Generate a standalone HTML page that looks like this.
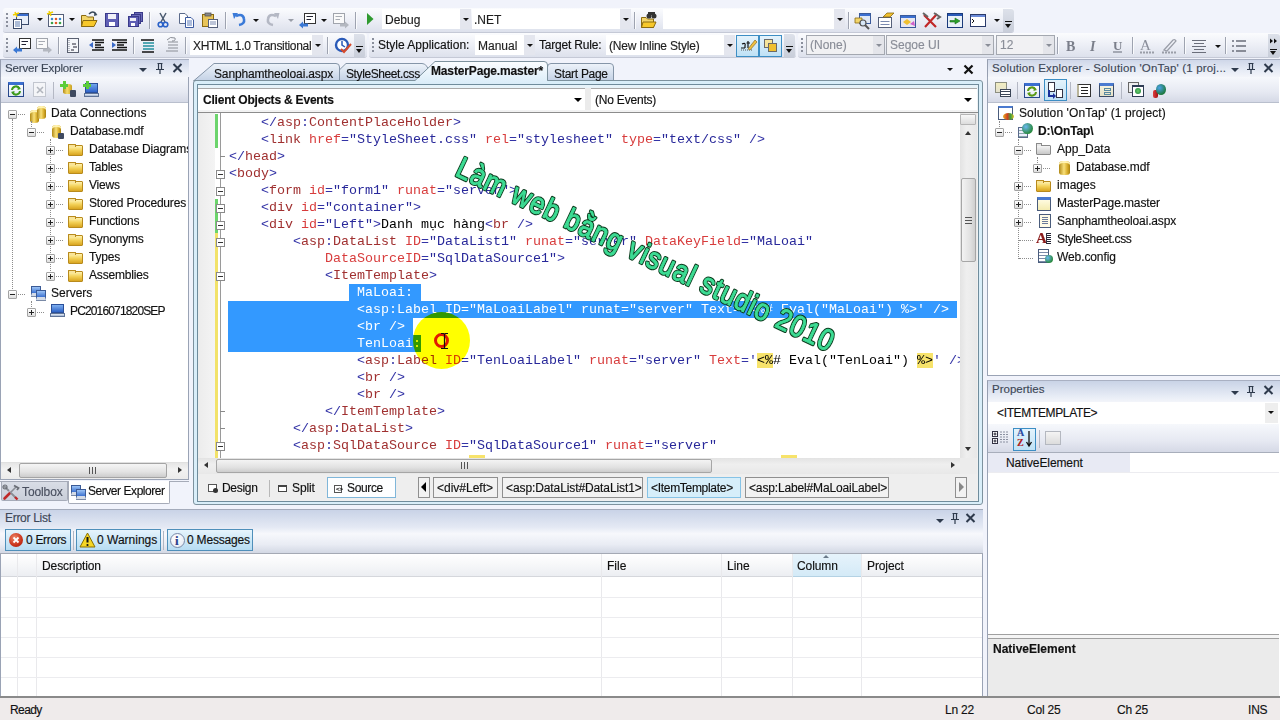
<!DOCTYPE html>
<html><head><meta charset="utf-8">
<style>
*{box-sizing:border-box}
body{margin:0;width:1280px;height:720px;overflow:hidden;background:#f1f3fb;position:relative;font-family:"Liberation Sans",sans-serif;font-size:12px;color:#1e1e1e;-webkit-text-stroke:0.15px currentColor}
.code{-webkit-text-stroke:0}
.a{position:absolute}
.tb{position:absolute;background:linear-gradient(#fbfcfe,#eef0f7 45%,#dde1ec);border-bottom:1px solid #c5c9d6;border-radius:3px}
.grip{position:absolute;width:2px;height:14px;background:linear-gradient(#8a8f9c 0 2px,transparent 2px) 0 0/2px 4px}
.sep{position:absolute;width:2px;top:4px;height:17px;background:linear-gradient(90deg,#9ea3b0 0 1px,#fafbfd 1px)}
.combo{position:absolute;background:#fff;height:20px;white-space:nowrap;overflow:hidden;padding-left:3px;line-height:22px;font-size:12px}
.combo .dd{position:absolute;right:0;top:0;width:11px;height:20px;background:#e4e6ee}
.dd:after,.arr:after{content:"";position:absolute;left:3px;top:9px;border-left:3px solid transparent;border-right:3px solid transparent;border-top:3px solid #111}
.arr{position:absolute;width:9px;height:9px}
.ph{position:absolute;height:18px;background:linear-gradient(#cfd7e9,#e6ebf5 60%,#f3f5fa);border-top:1px solid #a9b0c2;border-left:1px solid #969eb0;color:#3d4757;font-size:11.5px;line-height:17px;padding-left:4px;white-space:nowrap}
.ptb{position:absolute;height:26px;background:linear-gradient(#f6f8fc,#e6e9f2 60%,#d5d9e6);border-bottom:1px solid #b9bfcd}
.tree{position:absolute;background:#fff}
.row{position:absolute;height:18px;line-height:18px;white-space:nowrap;font-size:12px;color:#111}
.code{position:absolute;font-family:"Liberation Mono",monospace;font-size:13.333px;line-height:17px;white-space:pre;color:#000}
.cl{position:absolute;left:0;height:17px}
.sel,.sel span{color:#fff!important}
.hid,.hid span{color:transparent!important;-webkit-text-stroke:0}
.y{background:#f7e36b}
.ob{position:absolute;left:216px;width:9px;height:9px;border:1px solid #8a8a8a;background:#fff}
.ob:after{content:"";position:absolute;left:1px;top:3px;width:5px;height:1px;background:#333}
.otk{position:absolute;left:220px;width:5px;height:1px;background:#8a8a8a}
.bc{position:absolute;top:477px;height:21px;border:1px solid #8f8f8f;background:#f2f2f2;font-size:12px;line-height:20px;padding-left:3px;color:#111;white-space:nowrap}
.exp{position:absolute;width:9px;height:9px;border:1px solid #a3a3a3;border-radius:1px;background:linear-gradient(#fff,#dedede)}
.exp:after{content:"";position:absolute;left:1px;top:3px;width:5px;height:1px;background:#222}
.exp.p:before{content:"";position:absolute;left:3px;top:1px;width:1px;height:5px;background:#222}
.hd{position:absolute;height:1px;border-top:1px dotted #8c8c8c}
.vd{position:absolute;width:1px;border-left:1px dotted #8c8c8c}
.fold{position:absolute;margin-top:2px;width:15px;height:11px;border:1px solid #b88a1c;border-radius:1px;background:linear-gradient(#fff3b0,#f2cf55 50%,#d9a520)}
.fold:before{content:"";position:absolute;left:-1px;top:-2px;width:6px;height:2px;border:1px solid #b88a1c;border-bottom:none;border-radius:1px 1px 0 0;background:#f8e49a}
.cyl{position:absolute;width:9px;height:13px;border-radius:4.5px/2.5px;background:linear-gradient(90deg,#b08816,#f8e07a 45%,#d9ae2c 75%,#a8800e);box-shadow:inset 0 2px 0 #fff2b0}
.srv{position:absolute;width:10px;height:10px;background:linear-gradient(#9cc4f6,#3a70d0);border:1px solid #3a5a96;border-bottom:3px solid #d4dbe6;box-shadow:0 1px 0 #7a8aa6}
.plus{position:absolute;width:8px;height:8px;background:linear-gradient(#5ccc3a,#5ccc3a) center/8px 3px no-repeat,linear-gradient(#5ccc3a,#5ccc3a) center/3px 8px no-repeat;filter:drop-shadow(0 0 0.6px #1d6a10)}
.arr2{position:absolute;border-left:4px solid transparent;border-right:4px solid transparent;border-top:4px solid #2e3a4c}
.ebtn{position:absolute;top:529px;height:22px;border:1px solid #4f8fba;background:linear-gradient(#e6f4fc,#cde8f7 50%,#b7dcf2)}
.etx{position:absolute;top:532px;font-size:12px;line-height:16px;color:#111;white-space:nowrap}
.st{position:absolute;top:702px;font-size:12px;line-height:16px;color:#111;white-space:nowrap}
.ovf{position:absolute;width:11px;height:24px;background:linear-gradient(#dde1ea,#c8cdd9);border-radius:0 3px 3px 0}
.ovf:after{content:"";position:absolute;left:2px;top:15px;border-left:3.5px solid transparent;border-right:3.5px solid transparent;border-top:4px solid #111}
.ovf:before{content:"";position:absolute;left:2px;top:12px;width:7px;height:1px;background:#111}
.ovf2{position:absolute;width:12px;height:24px;background:linear-gradient(#dde1ea,#c8cdd9);border-radius:0 3px 3px 0}
.ovf2:after{content:"";position:absolute;left:2px;top:17px;border-left:3.5px solid transparent;border-right:3.5px solid transparent;border-top:4px solid #111}
.ovf2:before{content:none}
.combo.dis{background:#f1f1f3;border:1px solid #a4a8b0;color:#8a8e98;line-height:18px}
.combo.dis .dd{background:#e4e5ea;height:18px}
.combo.dis .dd:after{border-top-color:#8a8e98;top:8px}
.d{color:#3333a6}.e{color:#a03030}.n{color:#d83c3c}.v{color:#28289a}
</style></head><body>

<!-- ===== TOOLBAR ROW 1 ===== -->
<div class="tb" style="left:3px;top:8px;width:1011px;height:25px"></div>
<div class="grip" style="left:6px;top:13px"></div>
<div class="tb" style="left:3px;top:33px;width:364px;height:25px"></div>
<div class="tb" style="left:369px;top:33px;width:427px;height:25px"></div>
<div class="tb" style="left:798px;top:33px;width:482px;height:25px"></div>
<div class="grip" style="left:6px;top:38px"></div>
<div class="grip" style="left:372px;top:38px"></div>
<div class="grip" style="left:801px;top:38px"></div>
<svg class="a" style="left:0;top:0" width="1280" height="60">
<!-- new project -->
<rect x="16.5" y="13.5" width="12" height="11" fill="#e8eef8" stroke="#3a4a6a"/><rect x="17" y="14" width="11" height="2" fill="#3b6fd0"/>
<rect x="13.5" y="19.5" width="8" height="9" fill="#fff" stroke="#3a4a6a"/><path d="M15,22 H20 M15,24 H20 M15,26 H20" stroke="#5a7ab0"/>
<path d="M15,12 L17,17 M13,15 L19,13" stroke="#f2d000" stroke-width="1.5"/>
<!-- add item -->
<rect x="48.5" y="14.5" width="15" height="12" fill="#fff" stroke="#55607a"/><circle cx="52" cy="19" r="1.3" fill="#3a8ad0"/><circle cx="56" cy="19" r="1.3" fill="#e05a2a"/><circle cx="60" cy="19" r="1.3" fill="#3a8ad0"/><circle cx="52" cy="23" r="1.3" fill="#3aa04a"/><circle cx="56" cy="23" r="1.3" fill="#e05a2a"/><circle cx="60" cy="23" r="1.3" fill="#3aa04a"/>
<path d="M49,11 L51,16 M47,14 L53,12" stroke="#f2d000" stroke-width="1.5"/>
<!-- open -->
<path d="M81.5,15.5 H86 L87.5,17 H93.5 V26.5 H81.5 Z" fill="#f2d56a" stroke="#8a6a10"/><path d="M83,20.5 H97 L94,26.5 H81.5 Z" fill="#f7c82a" stroke="#8a6a10"/>
<path d="M89,14 Q93,10 96,14" stroke="#3a4a5a" stroke-width="1.5" fill="none"/><path d="M94.5,12 L97.5,15 L94,16 Z" fill="#3a4a5a"/>
<!-- save -->
<rect x="105.5" y="13.5" width="13" height="13" fill="#5f5fb5" stroke="#3a3a8a"/><rect x="108" y="14" width="8" height="5" fill="#f0f0f8"/><rect x="109" y="22" width="6" height="4" fill="#fff"/>
<!-- save all -->
<rect x="134.5" y="12.5" width="8" height="9" fill="#6a6ab8" stroke="#3a3a8a"/><rect x="131.5" y="14.5" width="9" height="9" fill="#6a6ab8" stroke="#3a3a8a"/><rect x="128.5" y="16.5" width="10" height="10" fill="#5f5fb5" stroke="#3a3a8a"/><rect x="130" y="18" width="6" height="3" fill="#f0f0f8"/><rect x="131" y="23" width="4" height="3" fill="#fff"/>
<!-- cut -->
<path d="M160,13 L165,22 M166,13 L161,22" stroke="#4a5a70" stroke-width="1.5"/><circle cx="160.5" cy="24.5" r="2.3" fill="none" stroke="#2a62c8" stroke-width="1.6"/><circle cx="165.5" cy="24.5" r="2.3" fill="none" stroke="#2a62c8" stroke-width="1.6"/>
<!-- copy -->
<path d="M179.5,13.5 H185 L187.5,16 V23.5 H179.5 Z" fill="#fff" stroke="#5a6a8a"/><path d="M185.5,17.5 H191 L193.5,20 V27.5 H185.5 Z" fill="#fff" stroke="#3a5aa0"/><path d="M187,21 H192 M187,23 H192 M187,25 H192" stroke="#5a7ab8"/>
<!-- paste -->
<rect x="202.5" y="14.5" width="11" height="12" fill="#e8c458" stroke="#8a6a10"/><rect x="205" y="13" width="6" height="3" fill="#888" stroke="#555" stroke-width="0.8"/><rect x="208.5" y="19.5" width="9" height="8" fill="#fff" stroke="#55607a"/><path d="M210,22 H216 M210,24 H216" stroke="#7a8ab0"/>
<!-- undo -->
<path d="M236,16 Q243,13 244,19 Q245,24 239,25" stroke="#3a7ad8" stroke-width="2.6" fill="none"/><path d="M232.5,13 L238,13 L234,19 Z" fill="#3a7ad8"/>
<!-- redo gray -->
<path d="M276,16 Q269,13 268,19 Q267,24 273,25" stroke="#b4b8c4" stroke-width="2.6" fill="none"/><path d="M279.5,13 L274,13 L278,19 Z" fill="#b4b8c4"/>
<!-- nav back -->
<rect x="304.5" y="13.5" width="11" height="10" fill="#fff" stroke="#333"/><path d="M306.5,16.5 H313 M306.5,19.5 H311" stroke="#223" stroke-width="1"/>
<path d="M299,25 L303,21.5 V23.5 H308 V26.5 H303 V28.5 Z" fill="#3a78d4"/>
<!-- nav fwd gray -->
<rect x="333.5" y="13.5" width="11" height="10" fill="#fafafa" stroke="#a0a4ac"/><path d="M335.5,16.5 H342 M335.5,19.5 H340" stroke="#a8acb4"/>
<path d="M349,25 L345,21.5 V23.5 H340 V26.5 H345 V28.5 Z" fill="#b4b8c0"/>
<!-- play -->
<path d="M367,13 L373.5,19 L367,25 Z" fill="#2f9a2f"/>
<!-- find in files -->
<path d="M641.5,17.5 H646 L647.5,19 H653.5 V27.5 H641.5 Z" fill="#f2d56a" stroke="#8a6a10"/><path d="M643,22 H656 L653.5,27.5 H641.5 Z" fill="#f7c82a" stroke="#8a6a10"/>
<circle cx="649" cy="16" r="2.5" fill="#333"/><circle cx="654" cy="16" r="2.5" fill="#333"/><rect x="648" y="12" width="7" height="3" fill="#333"/>
<!-- right group -->
<rect x="859.5" y="13.5" width="11" height="10" fill="#dfe8f5" stroke="#3a5a9a"/><rect x="860" y="14" width="10" height="2" fill="#3b6fd0"/>
<path d="M855,18 H862 V23 H855 Z" fill="#f2d56a" stroke="#8a6a10" stroke-width="0.8"/><circle cx="863" cy="23" r="3" fill="#d8e8f8" stroke="#555" stroke-width="1.2"/><path d="M865,25 L869,29" stroke="#555" stroke-width="2"/>
<rect x="878.5" y="17.5" width="13" height="10" fill="#fff" stroke="#55607a"/><path d="M880.5,21.5 H889.5 M880.5,24.5 H889.5" stroke="#7a8ab0"/><path d="M883,17 L887,13 H894 L890,17 Z" fill="#f0c030" stroke="#8a6a10" stroke-width="0.8"/>
<rect x="900.5" y="15.5" width="15" height="12" fill="#e8e8f0" stroke="#3a5a9a"/><rect x="901" y="16" width="14" height="2" fill="#3b6fd0"/><path d="M903,22 L907,19 L911,22 L907,25 Z" fill="#f0c030"/><path d="M910,24 L914,21 L915,26 Z" fill="#d060c8"/>
<path d="M925,27 L937,14 M924,15 L936,27" stroke="#c02828" stroke-width="2.2"/><path d="M923,13 L928,17 M934,13 L940,17 L937,19" stroke="#666" stroke-width="2" fill="none"/>
<rect x="947.5" y="13.5" width="15" height="14" fill="#e8f0f8" stroke="#1a3a7a"/><rect x="948" y="14" width="14" height="2" fill="#2a5ab8"/><path d="M950,20.5 H955 V18 L960,21 L955,24 V22 H950 Z" fill="#2aa02a" stroke="#1a701a" stroke-width="0.6"/>
<rect x="970.5" y="14.5" width="15" height="12" fill="#fff" stroke="#2a3a6a"/><rect x="971" y="15" width="14" height="2" fill="#6a8ad8"/><path d="M972,19 L974,21 L972,23" stroke="#111" fill="none"/>
<!-- row 2 left -->
<rect x="19.5" y="38.5" width="11" height="10" fill="#fff" stroke="#333"/><path d="M21.5,41.5 H28 M21.5,44.5 H26" stroke="#223"/>
<path d="M13,50 L17,46.5 V48.5 H22 V51.5 H17 V53.5 Z" fill="#3a78d4"/>
<rect x="36.5" y="38.5" width="11" height="10" fill="#fafafa" stroke="#a0a4ac"/><path d="M38.5,41.5 H45 M38.5,44.5 H43" stroke="#a8acb4"/>
<path d="M52,50 L48,46.5 V48.5 H43 V51.5 H48 V53.5 Z" fill="#b4b8c0"/>
<rect x="67.5" y="38.5" width="11" height="14" fill="#f4f6fa" stroke="#5a6070"/><path d="M69,40 V51" stroke="#7a8090" stroke-dasharray="1,1"/><path d="M72,44 H76 M73,47 H77 M71,50 H74" stroke="#223"/>
<path d="M92,40 H104 M95,42.5 H104 M95,45 H101 M95,47.5 H104 M92,50 H104" stroke="#111" stroke-width="1.5"/><path d="M89,45 L93,42 V48 Z" fill="#3a6ac8"/>
<path d="M112,40 H127 M117,42.5 H127 M117,45 H124 M117,47.5 H127 M112,50 H127" stroke="#111" stroke-width="1.5"/><path d="M116,45 L112,42 V48 Z" fill="#3a6ac8"/>
<path d="M141,40 H154 M143,43 H154 M143,46 H154 M143,49 H154 M142,52 H154" stroke="#111" stroke-width="1.3"/><path d="M143,43 H154 M143,46 H154 M143,49 H154" stroke="#5ac8d8" stroke-width="1.3"/>
<path d="M168,42 H178 M168,45 H178 M168,48 H178 M166,51 H178" stroke="#8a8e96" stroke-width="1.2"/><path d="M167,40 Q170,36 175,38 Q176,41 172,41" stroke="#8a8e96" fill="none"/>
<circle cx="342" cy="45" r="6" fill="#fff" stroke="#2a5ab8" stroke-width="2.4"/><path d="M342,41 V45 L345,47" stroke="#2a5ab8" stroke-width="1.5" fill="none"/><path d="M341,49 L344,52 L351,44" stroke="#d84a2a" stroke-width="2" fill="none"/>
<!-- formatting -->
<text x="1066" y="51" font-family="Liberation Serif" font-weight="bold" font-size="14" fill="#7a7e8a">B</text>
<text x="1090" y="51" font-family="Liberation Serif" font-style="italic" font-weight="bold" font-size="14" fill="#7a7e8a">I</text>
<text x="1113" y="50" font-family="Liberation Serif" font-weight="bold" font-size="13" fill="#7a7e8a">U</text><path d="M1113,52 H1122" stroke="#7a7e8a" stroke-width="1.2"/>
<text x="1140" y="50" font-family="Liberation Serif" font-size="15" fill="#8a8e9a">A</text><path d="M1140,52.5 H1154" stroke="#9a9ea8" stroke-width="2" stroke-dasharray="2,1"/>
<path d="M1164,50 L1173,40 Q1175,39 1176,41 L1167,51 Z" fill="none" stroke="#9a9ea8" stroke-width="1.3"/><path d="M1162,52.5 H1177" stroke="#9a9ea8" stroke-width="2" stroke-dasharray="2,1"/>
<path d="M1192,40.5 H1206 M1194,43.5 H1204 M1192,46.5 H1206 M1194,49.5 H1204 M1192,52.5 H1206" stroke="#6a6e7a" stroke-width="1.2"/>
<path d="M1232,41 H1234 M1232,46 H1234 M1232,51 H1234" stroke="#8a8e9a" stroke-width="2"/><path d="M1236,41 H1246 M1236,46 H1246 M1236,51 H1246" stroke="#6a6e7a" stroke-width="1.3"/>
</svg>
<div class="a" style="left:37px;top:18px;border-left:3px solid transparent;border-right:3px solid transparent;border-top:3px solid #111"></div>
<div class="a" style="left:69px;top:18px;border-left:3px solid transparent;border-right:3px solid transparent;border-top:3px solid #111"></div>
<div class="a" style="left:253px;top:19px;border-left:3px solid transparent;border-right:3px solid transparent;border-top:3px solid #111"></div>
<div class="a" style="left:321px;top:19px;border-left:3px solid transparent;border-right:3px solid transparent;border-top:3px solid #111"></div>
<div class="a" style="left:994px;top:19px;border-left:3px solid transparent;border-right:3px solid transparent;border-top:3px solid #111"></div>
<div class="a" style="left:1215px;top:45px;border-left:3px solid transparent;border-right:3px solid transparent;border-top:3px solid #111"></div>
<div class="a" style="left:288px;top:19px;border-left:3px solid transparent;border-right:3px solid transparent;border-top:3px solid #9a9ea8"></div>
<div class="sep" style="left:149px;top:12px"></div>
<div class="sep" style="left:225px;top:12px"></div>
<div class="sep" style="left:355px;top:12px"></div>
<div class="sep" style="left:634px;top:12px"></div>
<div class="sep" style="left:848px;top:12px"></div>
<div class="sep" style="left:58px;top:37px"></div>
<div class="sep" style="left:133px;top:37px"></div>
<div class="sep" style="left:185px;top:37px"></div>
<div class="sep" style="left:327px;top:37px"></div>
<div class="sep" style="left:1057px;top:37px"></div>
<div class="sep" style="left:1132px;top:37px"></div>
<div class="sep" style="left:1184px;top:37px"></div>
<div class="sep" style="left:1225px;top:37px"></div>
<div class="combo" style="left:382px;top:9px;width:89px;padding-left:3px">Debug<div class="dd" style="height:20px"></div></div>
<div class="combo" style="left:472px;top:9px;width:159px;padding-left:2px">.NET<div class="dd"></div></div>
<div class="combo" style="left:663px;top:9px;width:182px"><div class="dd"></div></div>
<div class="ovf" style="left:1003px;top:9px;height:23px"></div>
<!-- ===== TOOLBAR ROW 2 ===== -->

<div class="combo" style="left:190px;top:35px;width:133px;letter-spacing:-0.3px">XHTML 1.0 Transitional<div class="dd"></div></div>
<div class="ovf" style="left:354px;top:34px"></div>
<div class="a" style="left:378px;top:37px;font-size:12px;line-height:16px;color:#111;letter-spacing:0px">Style Application:</div>
<div class="combo" style="left:475px;top:35px;width:60px">Manual<div class="dd"></div></div>
<div class="a" style="left:539px;top:37px;font-size:12px;line-height:16px;color:#111;letter-spacing:-0.2px">Target Rule:</div>
<div class="combo" style="left:606px;top:35px;width:129px;letter-spacing:-0.2px">(New Inline Style)<div class="dd"></div></div>
<div class="a" style="left:736px;top:35px;width:23px;height:22px;border:1px solid #3d8ec4;background:linear-gradient(#e4f3fc,#bfe1f5)"></div>
<div class="a" style="left:759px;top:35px;width:23px;height:22px;border:1px solid #3d8ec4;background:linear-gradient(#e4f3fc,#bfe1f5)"></div>
<div class="ovf" style="left:784px;top:34px"></div>
<svg class="a" style="left:0;top:0" width="800" height="60"><!-- style buttons -->
<path d="M741,48 H745 M742,44 Q746,42 745,46 V48 M748,41 V48 M746.5,43 H750" stroke="#111" stroke-width="1.2" fill="none"/><path d="M741,50 H752" stroke="#555" stroke-dasharray="1,1"/><path d="M748,49 L755,40 L757,42 L750,50 Z" fill="#f0c040" stroke="#7a5a10" stroke-width="0.6"/>
<rect x="764.5" y="39.5" width="8" height="8" fill="#f6e49a" stroke="#6a6a6a"/><rect x="768.5" y="43.5" width="8" height="8" fill="#f0c030" stroke="#6a6a6a"/>
</svg>
<div class="combo dis" style="left:806px;top:35px;width:79px">(None)<div class="dd"></div></div>
<div class="combo dis" style="left:886px;top:35px;width:108px">Segoe UI<div class="dd"></div></div>
<div class="combo dis" style="left:996px;top:35px;width:59px">12<div class="dd"></div></div>
<div class="ovf2" style="left:1268px;top:34px"></div><svg class="a" style="left:1268px;top:34px" width="12" height="24"><path d="M2,4.5 L5,7 L2,9.5 Z M6,4.5 L9,7 L6,9.5 Z" fill="#111"/><path d="M2,15.5 H9" stroke="#111"/></svg>

<!-- ===== SERVER EXPLORER ===== -->
<div class="a" style="left:0;top:59px;width:189px;height:421px;background:#fff;border:1px solid #9aa3b5"></div>
<div class="ph" style="left:0;top:59px;width:189px;letter-spacing:-0.15px">Server Explorer</div>
<div class="arr2" style="left:139px;top:68px"></div>
<svg class="a" style="left:154px;top:62px" width="12" height="13"><path d="M3.5,1.5 H8.5 M4.5,1.5 V7.5 M7.5,1.5 V7.5 M2,7.5 H10 M6,7.5 V12" stroke="#2e3a4c" stroke-width="1.2" fill="none"/></svg>
<svg class="a" style="left:172px;top:63px" width="11" height="10"><path d="M1.5,1 L9.5,9 M9.5,1 L1.5,9" stroke="#2e3a4c" stroke-width="2"/></svg>
<div class="ptb" style="left:1px;top:77px;width:187px"></div>
<div class="a" style="left:8px;top:82px;width:16px;height:15px;border:1px solid #27478a;border-top:3px solid #3b6fd0;background:linear-gradient(#fff,#dfe8f5)"></div>
<svg class="a" style="left:10px;top:85px" width="12" height="11"><path d="M2,5 A4,4 0 0 1 9.5,3.5 M10,6 A4,4 0 0 1 2.5,7.5" stroke="#3d9a1c" stroke-width="2" fill="none"/><path d="M8,1 L11,4 L7.5,5 Z M4,10 L1,7 L4.5,6 Z" fill="#3d9a1c"/></svg>
<div class="a" style="left:33px;top:82px;width:13px;height:15px;border:1px solid #c2c6cf;background:#f4f5f8"></div>
<svg class="a" style="left:36px;top:86px" width="8" height="8"><path d="M1,1 L7,7 M7,1 L1,7" stroke="#b2b6be" stroke-width="1.6"/></svg>
<div class="a" style="left:53px;top:82px;width:1px;height:17px;background:#b4b8c4"></div>
<div class="a" style="left:63px;top:84px;width:9px;height:10px;border-radius:4px/2px;background:linear-gradient(90deg,#b48a18,#f6dc6a 45%,#c8a020)"></div>
<div class="a" style="left:70px;top:90px;width:6px;height:7px;background:#3f4a60;border-radius:1px"></div>
<div class="plus" style="left:60px;top:81px"></div>
<div class="a" style="left:85px;top:83px;width:13px;height:10px;background:linear-gradient(#72a6ec,#2f63c9);border:1px solid #2a4f9a"></div>
<div class="a" style="left:84px;top:93px;width:15px;height:4px;background:linear-gradient(#e8eef8,#9fb2cf);border:1px solid #5f7396"></div>
<div class="plus" style="left:83px;top:81px"></div>
<div class="vd" style="left:12px;top:119px;height:172px"></div>
<div class="exp" style="left:8px;top:110px"></div><div class="hd" style="left:18px;top:114px;width:7px"></div><div class="cyl" style="left:30px;top:110px"></div><div class="cyl" style="left:37px;top:106px"></div><div class="row" style="left:51px;top:104px;letter-spacing:0px">Data Connections</div>
<div class="vd" style="left:31px;top:121px;height:6px"></div>
<div class="exp" style="left:27px;top:128px"></div><div class="hd" style="left:37px;top:132px;width:7px"></div><div class="cyl" style="left:52px;top:125px"></div><div class="a" style="left:58px;top:133px;width:6px;height:6px;background:#3f4a60;border-radius:1px"></div><div class="row" style="left:70px;top:122px;letter-spacing:-0.1px">Database.mdf</div>
<div class="vd" style="left:50px;top:139px;height:136px"></div>
<div class="exp p" style="left:46px;top:146px"></div><div class="hd" style="left:56px;top:150px;width:7px"></div><div class="fold" style="left:68px;top:143px"></div><div class="row" style="left:89px;top:140px;letter-spacing:-0.18px;width:99px;overflow:hidden">Database Diagrams</div>
<div class="exp p" style="left:46px;top:164px"></div><div class="hd" style="left:56px;top:168px;width:7px"></div><div class="fold" style="left:68px;top:161px"></div><div class="row" style="left:89px;top:158px;letter-spacing:-0.18px">Tables</div>
<div class="exp p" style="left:46px;top:182px"></div><div class="hd" style="left:56px;top:186px;width:7px"></div><div class="fold" style="left:68px;top:179px"></div><div class="row" style="left:89px;top:176px;letter-spacing:-0.18px">Views</div>
<div class="exp p" style="left:46px;top:200px"></div><div class="hd" style="left:56px;top:204px;width:7px"></div><div class="fold" style="left:68px;top:197px"></div><div class="row" style="left:89px;top:194px;letter-spacing:-0.18px">Stored Procedures</div>
<div class="exp p" style="left:46px;top:218px"></div><div class="hd" style="left:56px;top:222px;width:7px"></div><div class="fold" style="left:68px;top:215px"></div><div class="row" style="left:89px;top:212px;letter-spacing:-0.18px">Functions</div>
<div class="exp p" style="left:46px;top:236px"></div><div class="hd" style="left:56px;top:240px;width:7px"></div><div class="fold" style="left:68px;top:233px"></div><div class="row" style="left:89px;top:230px;letter-spacing:-0.18px">Synonyms</div>
<div class="exp p" style="left:46px;top:254px"></div><div class="hd" style="left:56px;top:258px;width:7px"></div><div class="fold" style="left:68px;top:251px"></div><div class="row" style="left:89px;top:248px;letter-spacing:-0.18px">Types</div>
<div class="exp p" style="left:46px;top:272px"></div><div class="hd" style="left:56px;top:276px;width:7px"></div><div class="fold" style="left:68px;top:269px"></div><div class="row" style="left:89px;top:266px;letter-spacing:-0.18px">Assemblies</div>
<div class="exp" style="left:8px;top:290px"></div><div class="hd" style="left:18px;top:294px;width:7px"></div>
<div class="srv" style="left:31px;top:286px"></div><div class="srv" style="left:36px;top:290px"></div>
<div class="row" style="left:51px;top:284px;">Servers</div>
<div class="vd" style="left:31px;top:301px;height:6px"></div>
<div class="exp p" style="left:27px;top:308px"></div><div class="hd" style="left:37px;top:312px;width:7px"></div>
<div class="a" style="left:51px;top:304px;width:13px;height:9px;background:linear-gradient(#7fb0f0,#2d62c6);border:1px solid #2a4f9a"></div><div class="a" style="left:50px;top:313px;width:15px;height:4px;background:linear-gradient(#e8eef8,#9fb2cf);border:1px solid #5f7396"></div>
<div class="row" style="left:70px;top:302px;letter-spacing:-0.85px">PC2016071820SEP</div>
<div class="a" style="left:1px;top:462px;width:187px;height:17px;background:linear-gradient(#e6e6e6,#f2f2f2 40%,#ebebeb);border-top:1px solid #e0e0e0"></div>
<div class="a" style="left:7px;top:467px;border-top:3.5px solid transparent;border-bottom:3.5px solid transparent;border-right:4px solid #333"></div>
<div class="a" style="left:178px;top:467px;border-top:3.5px solid transparent;border-bottom:3.5px solid transparent;border-left:4px solid #333"></div>
<div class="a" style="left:19px;top:463px;width:148px;height:15px;background:linear-gradient(#f5f5f5,#e3e3e3 60%,#cccccc);border:1px solid #a4a4a4;border-radius:2px"></div>
<div class="a" style="left:89px;top:467px;width:7px;height:7px;background:repeating-linear-gradient(90deg,#555 0 1px,transparent 1px 3px)"></div>
<div class="a" style="left:0;top:480px;width:189px;height:29px;background:#f1f3fb"></div>
<div class="a" style="left:0;top:481px;width:189px;height:1px;background:#a6abb8"></div>
<div class="a" style="left:1px;top:482px;width:67px;height:19px;background:linear-gradient(#d9dde6,#c9ced9);border:1px solid #a6abb8;border-top:none;border-radius:0 0 2px 2px"></div>
<svg class="a" style="left:2px;top:484px" width="18" height="17"><path d="M2.5,14.5 L8,9" stroke="#c02828" stroke-width="2.6" stroke-linecap="round"/><path d="M8,9 L14,3" stroke="#8a8e96" stroke-width="1.6"/><path d="M12,1.5 L16.5,4 L15,6" stroke="#6a6e76" stroke-width="1.8" fill="none"/><path d="M2,2 L7,7 M9,9 L14,14" stroke="#8a8e96" stroke-width="1.8"/><path d="M13,13 L15.5,15.5" stroke="#c02828" stroke-width="2.4"/><circle cx="3" cy="3" r="2" fill="none" stroke="#6a6e76" stroke-width="1.2"/></svg>
<div class="a" style="left:22px;top:484px;font-size:12px;line-height:16px;color:#4a5060;letter-spacing:-0.1px">Toolbox</div>
<div class="a" style="left:68px;top:481px;width:102px;height:23px;background:#fff;border:1px solid #a6abb8;border-top:none;border-radius:0 0 2px 2px"></div>
<div class="srv" style="left:71px;top:485px"></div><div class="srv" style="left:76px;top:489px"></div>
<div class="a" style="left:88px;top:483px;font-size:12px;line-height:16px;color:#111;letter-spacing:-0.45px">Server Explorer</div>

<!-- ===== DOCUMENT WELL ===== -->
<div class="a" style="left:193px;top:80px;width:790px;height:425px;border:1px solid #7d929e;border-radius:3px;background:#d9eef9"></div>
<div class="a" style="left:197px;top:84px;width:782px;height:418px;border:1px solid #6f8c9c;background:#f0f0f0"></div>
<svg class="a" style="left:0;top:0" width="1280" height="90">
<defs>
<linearGradient id="tabI" x1="0" y1="0" x2="0" y2="1"><stop offset="0" stop-color="#eef3fa"/><stop offset="1" stop-color="#c3d1e5"/></linearGradient>
<linearGradient id="tabA" x1="0" y1="0" x2="0" y2="1"><stop offset="0" stop-color="#fbfdff"/><stop offset="1" stop-color="#d9ecf8"/></linearGradient>
</defs>
<path d="M328,81 L346,63.5 H422 Q425,63.5 426.5,66 L429,70 L419,81" fill="url(#tabI)" stroke="#8595a8"/>
<path d="M193.5,81 L214,63.5 H336 Q339.5,63.5 339.5,67 V81" fill="url(#tabI)" stroke="#8595a8"/>
<path d="M547.5,81 V67 Q547.5,63.5 551,63.5 H610 Q613.5,63.5 613.5,67 V81" fill="url(#tabI)" stroke="#8595a8"/>
<path d="M415,81 L435,61.5 H544 Q547.5,61.5 547.5,65 V81 V84 H415 Z" fill="url(#tabA)" stroke="none"/>
<path d="M415,80.5 L435,61.5 H544 Q547.5,61.5 547.5,65 V80.5" fill="none" stroke="#7d929e"/>
<path d="M193.5,80.5 H415 M547.5,80.5 H979" stroke="#7d929e"/>
</svg>
<div class="a" style="left:214px;top:65.5px;font-size:12px;line-height:16px;letter-spacing:-0.15px;color:#111">Sanphamtheoloai.aspx</div>
<div class="a" style="left:346px;top:65.5px;font-size:12px;line-height:16px;letter-spacing:-0.4px;color:#111">StyleSheet.css</div>
<div class="a" style="left:431px;top:63px;font-size:12px;line-height:16px;letter-spacing:-0.15px;font-weight:bold;color:#111">MasterPage.master*</div>
<div class="a" style="left:554px;top:65.5px;font-size:12px;line-height:16px;letter-spacing:-0.3px;color:#111">Start Page</div>
<div class="arr" style="left:944px;top:59px"></div>
<svg class="a" style="left:963px;top:64px" width="12" height="11"><path d="M1.5,1.5 L9.5,9.5 M9.5,1.5 L1.5,9.5" stroke="#111" stroke-width="2.2"/></svg>
<div class="a" style="left:198px;top:85px;width:780px;height:28px;background:linear-gradient(#e6f3fa,#f2f2f2);border-bottom:1px solid #8c8c8c"></div>
<div class="a" style="left:198px;top:88px;width:387px;height:22px;background:#fff;border-top:1px solid #a9a9a9"></div>
<div class="a" style="left:591px;top:88px;width:386px;height:22px;background:#fff;border-top:1px solid #a9a9a9"></div>
<div class="a" style="left:585px;top:88px;width:6px;height:22px;background:#ebebeb"></div>
<div class="a" style="left:203px;top:92px;font-size:12px;line-height:16px;font-weight:bold;letter-spacing:-0.2px;color:#111">Client Objects &amp; Events</div>
<div class="a" style="left:595px;top:92px;font-size:12px;line-height:16px;letter-spacing:-0.2px;color:#111">(No Events)</div>
<div class="a" style="left:574px;top:98px;border-left:4px solid transparent;border-right:4px solid transparent;border-top:4px solid #000"></div>
<div class="a" style="left:964px;top:98px;border-left:4px solid transparent;border-right:4px solid transparent;border-top:4px solid #000"></div>
<div class="a" style="left:198px;top:113px;width:762px;height:345px;background:#fff"></div>
<!-- code area -->
<div class="a" style="left:198px;top:113px;width:17px;height:345px;background:linear-gradient(90deg,#ececec,#f4f4f4)"></div>
<div class="a" style="left:215px;top:114px;width:3px;height:34px;background:#6cd46c"></div>
<div class="a" style="left:215px;top:199px;width:3px;height:34px;background:#6cd46c"></div>
<div class="a" style="left:215px;top:233px;width:3px;height:225px;background:#f2e26a"></div>
<div class="a" style="left:220px;top:113px;width:1px;height:345px;background:#9a9a9a"></div>
<!-- outline boxes -->
<div class="ob" style="top:170px"></div><div class="ob" style="top:187px"></div><div class="ob" style="top:204px"></div><div class="ob" style="top:221px"></div><div class="ob" style="top:238px"></div><div class="ob" style="top:272px"></div><div class="ob" style="top:442px"></div>
<div class="otk" style="top:156px"></div><div class="otk" style="top:411px"></div><div class="otk" style="top:428px"></div>
<!-- vscroll -->
<div class="a" style="left:960px;top:113px;width:17px;height:345px;background:linear-gradient(90deg,#e3e3e3,#efefef 40%,#e8e8e8)"></div>
<div class="a" style="left:960px;top:114px;width:16px;height:11px;background:linear-gradient(#f8f8f8,#dcdcdc);border:1px solid #b5b5b5;border-radius:1px"></div>
<div class="a" style="left:965px;top:131px;border-left:3.5px solid transparent;border-right:3.5px solid transparent;border-bottom:4px solid #333"></div>
<div class="a" style="left:961px;top:178px;width:15px;height:84px;background:linear-gradient(90deg,#f3f3f3,#e2e2e2 60%,#cfcfcf);border:1px solid #a6a6a6;border-radius:2px"></div>
<div class="a" style="left:965px;top:217px;width:7px;height:7px;background:repeating-linear-gradient(#555 0 1px,transparent 1px 3px)"></div>
<div class="a" style="left:965px;top:447px;border-left:3.5px solid transparent;border-right:3.5px solid transparent;border-top:4px solid #333"></div>
<!-- hscroll -->
<div class="a" style="left:198px;top:458px;width:779px;height:17px;background:linear-gradient(#e3e3e3,#efefef 40%,#e8e8e8);border-bottom:1px solid #a8a8a8"></div>
<div class="a" style="left:204px;top:462px;border-top:3.5px solid transparent;border-bottom:3.5px solid transparent;border-right:4px solid #333"></div>
<div class="a" style="left:951px;top:462px;border-top:3.5px solid transparent;border-bottom:3.5px solid transparent;border-left:4px solid #333"></div>
<div class="a" style="left:216px;top:459px;width:496px;height:14px;background:linear-gradient(#f4f4f4,#e2e2e2 60%,#cdcdcd);border:1px solid #a6a6a6;border-radius:2px"></div>
<div class="a" style="left:461px;top:462px;width:7px;height:7px;background:repeating-linear-gradient(90deg,#555 0 1px,transparent 1px 3px)"></div>
<div class="a" style="left:960px;top:458px;width:17px;height:16px;background:#ececec"></div>
<!-- bottom bar -->
<div class="a" style="left:198px;top:474px;width:779px;height:26px;background:#eeeeee"></div>
<div class="a" style="left:208px;top:484px;width:9px;height:8px;border:1px solid #555;background:#fff"></div>
<div class="a" style="left:213px;top:488px;width:5px;height:5px;border-radius:50%;background:#333"></div>
<div class="a" style="left:222px;top:480px;font-size:12px;line-height:16px;color:#111;letter-spacing:-0.3px">Design</div>
<div class="a" style="left:269px;top:480px;width:1px;height:17px;background:#b8b8b8"></div>
<div class="a" style="left:278px;top:485px;width:9px;height:7px;border:1px solid #444;border-top-width:2px;background:#fff"></div>
<div class="a" style="left:292px;top:480px;font-size:12px;line-height:16px;color:#111;letter-spacing:-0.1px">Split</div>
<div class="a" style="left:327px;top:477px;width:69px;height:21px;border:1px solid #7fb6d9;background:#fdfeff"></div>
<div class="a" style="left:334px;top:485px;width:8px;height:8px;border:1px solid #555;background:#fff"></div>
<div class="a" style="left:336px;top:486px;font-size:6px;line-height:6px;color:#111">&lt;&gt;</div>
<div class="a" style="left:347px;top:480px;font-size:12px;line-height:16px;color:#111;letter-spacing:-0.35px">Source</div>
<div class="bc" style="left:418px;width:12px"></div>
<div class="a" style="left:421px;top:482px;border-top:5px solid transparent;border-bottom:5px solid transparent;border-right:5px solid #000"></div>
<div class="bc" style="left:433px;width:65px">&lt;div#Left&gt;</div>
<div class="bc" style="left:502px;width:141px;letter-spacing:-0.1px">&lt;asp:DataList#DataList1&gt;</div>
<div class="bc" style="left:647px;width:94px;background:#d6eefa;border-color:#86c3e6;letter-spacing:-0.3px">&lt;ItemTemplate&gt;</div>
<div class="bc" style="left:745px;width:144px;letter-spacing:-0.15px">&lt;asp:Label#MaLoaiLabel&gt;</div>
<div class="bc" style="left:955px;width:12px"></div>
<div class="a" style="left:959px;top:482px;border-top:5px solid transparent;border-bottom:5px solid transparent;border-left:5px solid #888"></div>
<div class="a" id="code" style="left:221px;top:114px;width:739px;height:344px;overflow:hidden">
<div class="a" style="left:128px;top:170px;width:72px;height:17px;background:#3399ff"></div>
<div class="a" style="left:7px;top:187px;width:729px;height:17px;background:#3399ff"></div>
<div class="a" style="left:7px;top:204px;width:185px;height:34px;background:#3399ff"></div>
<div class="a" style="left:192px;top:221px;width:8px;height:17px;background:#3399ff"></div>
<div class="code" style="left:8px;top:0">
<div class="cl" style="top:0px">    <span class="d">&lt;/</span><span class="e">asp</span><span class="d">:</span><span class="e">ContentPlaceHolder</span><span class="d">&gt;</span></div>
<div class="cl" style="top:17px">    <span class="d">&lt;</span><span class="e">link</span> <span class="n">href</span><span class="d">=</span><span class="v">"StyleSheet.css"</span> <span class="n">rel</span><span class="d">=</span><span class="v">"stylesheet"</span> <span class="n">type</span><span class="d">=</span><span class="v">"text/css"</span><span class="d"> /&gt;</span></div>
<div class="cl" style="top:34px"><span class="d">&lt;/</span><span class="e">head</span><span class="d">&gt;</span></div>
<div class="cl" style="top:51px"><span class="d">&lt;</span><span class="e">body</span><span class="d">&gt;</span></div>
<div class="cl" style="top:68px">    <span class="d">&lt;</span><span class="e">form</span> <span class="n">id</span><span class="d">=</span><span class="v">"form1"</span> <span class="n">runat</span><span class="d">=</span><span class="v">"server"</span><span class="d">&gt;</span></div>
<div class="cl" style="top:85px">    <span class="d">&lt;</span><span class="e">div</span> <span class="n">id</span><span class="d">=</span><span class="v">"container"</span><span class="d">&gt;</span></div>
<div class="cl" style="top:102px">    <span class="d">&lt;</span><span class="e">div</span> <span class="n">id</span><span class="d">=</span><span class="v">"Left"</span><span class="d">&gt;</span>Danh mục hàng<span class="d">&lt;</span><span class="e">br</span><span class="d"> /&gt;</span></div>
<div class="cl" style="top:119px">        <span class="d">&lt;</span><span class="e">asp</span><span class="d">:</span><span class="e">DataList</span> <span class="n">ID</span><span class="d">=</span><span class="v">"DataList1"</span> <span class="n">runat</span><span class="d">=</span><span class="v">"server"</span> <span class="n">DataKeyField</span><span class="d">=</span><span class="v">"MaLoai"</span></div>
<div class="cl" style="top:136px">            <span class="n">DataSourceID</span><span class="d">=</span><span class="v">"SqlDataSource1"</span><span class="d">&gt;</span></div>
<div class="cl" style="top:153px">            <span class="d">&lt;</span><span class="e">ItemTemplate</span><span class="d">&gt;</span></div>
<div class="cl sel" style="top:170px">                MaLoai:</div>
<div class="cl sel" style="top:187px">                <span class="d">&lt;</span><span class="e">asp</span><span class="d">:</span><span class="e">Label</span> <span class="n">ID</span><span class="d">=</span><span class="v">"MaLoaiLabel"</span> <span class="n">runat</span><span class="d">=</span><span class="v">"server"</span> <span class="n">Text</span><span class="d">='</span>&lt;%# Eval("MaLoai") %&gt;<span class="d">'</span><span class="d"> /&gt;</span></div>
<div class="cl sel" style="top:204px">                <span class="d">&lt;</span><span class="e">br</span><span class="d"> /&gt;</span></div>
<div class="cl sel" style="top:221px">                TenLoai:</div>
<div class="cl" style="top:238px">                <span class="d">&lt;</span><span class="e">asp</span><span class="d">:</span><span class="e">Label</span> <span class="n">ID</span><span class="d">=</span><span class="v">"TenLoaiLabel"</span> <span class="n">runat</span><span class="d">=</span><span class="v">"server"</span> <span class="n">Text</span><span class="d">='</span><span class="y">&lt;%</span># Eval("TenLoai") <span class="y">%&gt;</span><span class="d">'</span><span class="d"> /&gt;</span></div>
<div class="cl" style="top:255px">                <span class="d">&lt;</span><span class="e">br</span><span class="d"> /&gt;</span></div>
<div class="cl" style="top:272px">                <span class="d">&lt;</span><span class="e">br</span><span class="d"> /&gt;</span></div>
<div class="cl" style="top:289px">            <span class="d">&lt;/</span><span class="e">ItemTemplate</span><span class="d">&gt;</span></div>
<div class="cl" style="top:306px">        <span class="d">&lt;/</span><span class="e">asp</span><span class="d">:</span><span class="e">DataList</span><span class="d">&gt;</span></div>
<div class="cl" style="top:323px">        <span class="d">&lt;</span><span class="e">asp</span><span class="d">:</span><span class="e">SqlDataSource</span> <span class="n">ID</span><span class="d">=</span><span class="v">"SqlDataSource1"</span> <span class="n">runat</span><span class="d">=</span><span class="v">"server"</span></div>
<div class="cl hid" style="top:340px">            <span class="n">ConnectionString</span><span class="d">=</span><span class="v">"</span><span class="y">&lt;%</span>$ ConnectionStrings:ConnectionString <span class="y">%&gt;</span><span class="v">"</span></div>
</div>
</div>


<!-- watermark + cursor highlight -->
<svg class="a" style="left:0;top:0;pointer-events:none" width="1280" height="720">
<g transform="translate(454,175) rotate(25.3) scale(0.86,1)" font-family="Liberation Sans" font-size="30" letter-spacing="1.2" stroke-linejoin="round"><text fill="#0a3a1c" stroke="#0a3a1c" stroke-width="3">Làm web bằng visual studio 2010</text><text fill="#3ddc94" stroke="#3ddc94" stroke-width="0.9">Làm web bằng visual studio 2010</text></g>
</svg>
<div class="a" style="left:412.5px;top:311.5px;width:57px;height:57px;border-radius:50%;background:#ffff00;mix-blend-mode:multiply"></div>
<div class="a" style="left:434px;top:333px;width:15px;height:15px;border-radius:50%;border:3.5px solid #e21a00"></div>
<svg class="a" style="left:438px;top:331px" width="12" height="20"><path d="M3,2.5 H5.5 Q6.5,2.5 6.5,3.5 V16.5 Q6.5,17.5 5.5,17.5 H3 M10,2.5 H7.5 Q6.5,2.5 6.5,3.5 M6.5,16.5 Q6.5,17.5 7.5,17.5 H10" stroke="#111" stroke-width="1.2" fill="none"/></svg>
<!-- ===== SOLUTION EXPLORER ===== -->
<div class="a" style="left:987px;top:59px;width:294px;height:317px;background:#fff;border:1px solid #9aa3b5;border-right:none"></div>
<div class="ph" style="left:987px;top:59px;width:293px;letter-spacing:0.17px">Solution Explorer - Solution 'OnTap' (1 proj...</div>
<div class="arr2" style="left:1231px;top:68px"></div>
<svg class="a" style="left:1245px;top:62px" width="12" height="13"><path d="M3.5,1.5 H8.5 M4.5,1.5 V7.5 M7.5,1.5 V7.5 M2,7.5 H10 M6,7.5 V12" stroke="#2e3a4c" stroke-width="1.2" fill="none"/></svg>
<svg class="a" style="left:1263px;top:63px" width="11" height="10"><path d="M1.5,1 L9.5,9 M9.5,1 L1.5,9" stroke="#2e3a4c" stroke-width="2"/></svg>
<div class="ptb" style="left:988px;top:77px;width:291px"></div>
<div class="a" style="left:995px;top:82px;width:12px;height:11px;border:1px solid #8c8f80;background:linear-gradient(#f1edc0,#e4e1cf)"></div>
<div class="a" style="left:1000px;top:89px;width:11px;height:8px;border:1px solid #3b4556;background:repeating-linear-gradient(#fff 0 1px,#3b4556 1px 2px,#fff 2px 3px)"></div>
<div class="a" style="left:1017px;top:82px;width:1px;height:17px;background:#b4b8c4"></div>
<div class="a" style="left:1024px;top:83px;width:16px;height:15px;border:1px solid #27478a;border-top:3px solid #3b6fd0;background:linear-gradient(#fff,#dfe8f5)"></div>
<svg class="a" style="left:1026px;top:86px" width="12" height="11"><path d="M2,5 A4,4 0 0 1 9.5,3.5 M10,6 A4,4 0 0 1 2.5,7.5" stroke="#5a9a16" stroke-width="2" fill="none"/><path d="M8,1 L11,4 L7.5,5 Z M4,10 L1,7 L4.5,6 Z" fill="#5a9a16"/></svg>
<div class="a" style="left:1044px;top:79px;width:23px;height:22px;border:1px solid #3d8ec4;background:linear-gradient(#e4f3fc,#bfe1f5)"></div>
<div class="a" style="left:1048px;top:82px;width:7px;height:10px;border:1px solid #334;background:#fff"></div><div class="a" style="left:1056px;top:89px;width:7px;height:9px;border:1px solid #334;background:#fff"></div>
<svg class="a" style="left:1047px;top:90px" width="10" height="10"><path d="M2,0 V6 H6" stroke="#1a2f9a" stroke-width="2" fill="none"/><path d="M6,3 L9,6 L6,9 Z" fill="#1a2f9a"/></svg>
<div class="a" style="left:1070px;top:82px;width:1px;height:17px;background:#b4b8c4"></div>
<div class="a" style="left:1077px;top:84px;width:14px;height:13px;border:1px solid #333;border-left:2px solid #b8b49a;background:#fff"></div>
<div class="a" style="left:1081px;top:87px;width:7px;height:7px;background:repeating-linear-gradient(#222 0 1px,transparent 1px 3px)"></div>
<div class="a" style="left:1099px;top:83px;width:15px;height:14px;border:1px solid #3a4a66;border-top:3px solid #4a7ad0;background:linear-gradient(#f4f1de,#e6e2c8)"></div>
<div class="a" style="left:1104px;top:88px;width:7px;height:3px;border:1px solid #5a8aa0"></div><div class="a" style="left:1104px;top:92px;width:7px;height:3px;border:1px solid #5a8aa0"></div>
<div class="a" style="left:1121px;top:82px;width:1px;height:17px;background:#b4b8c4"></div>
<div class="a" style="left:1128px;top:82px;width:11px;height:11px;border:1px solid #666;background:#eee"></div>
<div class="a" style="left:1132px;top:85px;width:12px;height:12px;border:1px solid #2f3d55;border-top:2px solid #2f3d55;background:#fff"></div>
<div class="a" style="left:1135px;top:88px;width:6px;height:6px;border-radius:50%;background:radial-gradient(#6ad06a,#1a7a3a)"></div>
<div class="a" style="left:1153px;top:90px;width:5px;height:8px;border-radius:2px;background:linear-gradient(90deg,#e04040,#a01010)"></div>
<div class="a" style="left:1156px;top:84px;width:10px;height:11px;border-radius:50%;background:radial-gradient(circle at 35% 35%,#4aa0e8,#1e7a40 70%)"></div>
<div class="a" style="left:998px;top:106px;width:15px;height:14px;border:1px solid #4a5c7c;border-top:2px solid #4a7ad0;background:#fff"></div>
<div class="a" style="left:1003px;top:113px;width:11px;height:7px;border-radius:50%;background:linear-gradient(90deg,#e8b020,#d04020 40%,#40a040 70%,#e8c020)"></div>
<div class="row" style="left:1019px;top:104px;letter-spacing:0.1px">Solution 'OnTap' (1 project)</div>
<div class="vd" style="left:999px;top:121px;height:6px"></div>
<div class="exp" style="left:995px;top:128px"></div><div class="hd" style="left:1005px;top:132px;width:7px"></div>
<div class="a" style="left:1018px;top:127px;width:10px;height:11px;border:1px solid #5a6a8a;background:repeating-linear-gradient(#eef 0 2px,#8aa 2px 3px)"></div>
<div class="a" style="left:1022px;top:123px;width:11px;height:11px;border-radius:50%;background:radial-gradient(circle at 35% 35%,#6ab8f0,#2a8a40 70%)"></div>
<div class="row" style="left:1038px;top:122px;font-weight:bold;letter-spacing:-0.1px">D:\OnTap\</div>
<div class="vd" style="left:1018px;top:139px;height:120px"></div>
<div class="exp" style="left:1014px;top:146px"></div><div class="hd" style="left:1024px;top:150px;width:7px"></div>
<div class="a" style="left:1036px;top:145px;width:15px;height:10px;border:1px solid #8a8a8a;border-radius:1px;background:linear-gradient(#f4f4f4,#c8c8c8)"></div>
<div class="a" style="left:1036px;top:143px;width:6px;height:3px;border:1px solid #8a8a8a;border-bottom:none;background:#e8e8e8"></div>
<div class="row" style="left:1057px;top:140px;letter-spacing:0px">App_Data</div>
<div class="vd" style="left:1037px;top:157px;height:6px"></div>
<div class="exp p" style="left:1033px;top:164px"></div><div class="hd" style="left:1043px;top:168px;width:7px"></div>
<div class="cyl" style="left:1059px;top:161px;width:11px;height:14px"></div>
<div class="row" style="left:1076px;top:158px;letter-spacing:-0.1px">Database.mdf</div>
<div class="exp p" style="left:1014px;top:182px"></div><div class="hd" style="left:1024px;top:186px;width:7px"></div>
<div class="fold" style="left:1036px;top:179px"></div>
<div class="row" style="left:1057px;top:176px;letter-spacing:0px">images</div>
<div class="exp p" style="left:1014px;top:200px"></div><div class="hd" style="left:1024px;top:204px;width:7px"></div>
<div class="a" style="left:1037px;top:197px;width:14px;height:14px;border:1px solid #4a5c7c;border-top:3px solid #4a7ad0;background:linear-gradient(#fffbe0,#f4ecb0)"></div>
<div class="row" style="left:1057px;top:194px;letter-spacing:-0.1px">MasterPage.master</div>
<div class="exp p" style="left:1014px;top:218px"></div><div class="hd" style="left:1024px;top:222px;width:7px"></div>
<div class="a" style="left:1039px;top:214px;width:12px;height:14px;border:1px solid #4a5c7c;background:#fffbe6"></div><div class="a" style="left:1042px;top:217px;width:6px;height:7px;background:repeating-linear-gradient(#6a7a9a 0 1px,transparent 1px 2px)"></div>
<div class="row" style="left:1057px;top:212px;letter-spacing:-0.15px">Sanphamtheoloai.aspx</div>
<div class="hd" style="left:1019px;top:240px;width:14px"></div>
<div class="a" style="left:1036px;top:231px;font-family:Liberation Serif;font-weight:bold;font-size:15px;line-height:15px;color:#8a1a1a">A</div><div class="a" style="left:1046px;top:233px;width:5px;height:11px;border-left:1px solid #334;background:repeating-linear-gradient(#223 0 1px,#fff 1px 2px)"></div>
<div class="row" style="left:1057px;top:230px;letter-spacing:-0.35px">StyleSheet.css</div>
<div class="hd" style="left:1019px;top:258px;width:14px"></div>
<div class="a" style="left:1038px;top:249px;width:11px;height:14px;border:1px solid #4a5c7c;background:repeating-linear-gradient(#fff 0 2px,#7a8aa8 2px 3px)"></div><div class="a" style="left:1045px;top:255px;width:8px;height:8px;border-radius:50%;background:radial-gradient(circle at 35% 35%,#6ab8f0,#2a8a40 70%)"></div>
<div class="row" style="left:1057px;top:248px;letter-spacing:-0.1px">Web.config</div>

<!-- ===== PROPERTIES ===== -->
<div class="a" style="left:987px;top:380px;width:294px;height:318px;background:#fff;border:1px solid #9aa3b5;border-right:none"></div>
<div class="ph" style="left:987px;top:380px;width:293px;height:22px;line-height:17px;background:linear-gradient(#c9d3e6,#e6ebf5 70%,#f3f5fa)">Properties</div>
<div class="arr2" style="left:1231px;top:391px"></div>
<svg class="a" style="left:1245px;top:385px" width="12" height="13"><path d="M3.5,1.5 H8.5 M4.5,1.5 V7.5 M7.5,1.5 V7.5 M2,7.5 H10 M6,7.5 V12" stroke="#2e3a4c" stroke-width="1.2" fill="none"/></svg>
<svg class="a" style="left:1263px;top:385px" width="11" height="10"><path d="M1.5,1 L9.5,9 M9.5,1 L1.5,9" stroke="#2e3a4c" stroke-width="2"/></svg>
<div class="a" style="left:988px;top:402px;width:291px;height:22px;background:#fff"></div>
<div class="a" style="left:1265px;top:403px;width:13px;height:20px;background:#eeeeee"></div>
<div class="a" style="left:1268px;top:411px;border-left:3px solid transparent;border-right:3px solid transparent;border-top:3px solid #111"></div>
<div class="a" style="left:997px;top:405px;font-size:12px;line-height:16px;color:#111;letter-spacing:-0.35px">&lt;ITEMTEMPLATE&gt;</div>
<div class="ptb" style="left:988px;top:424px;width:291px;height:29px;border-bottom:1px solid #a8aebb"></div>
<svg class="a" style="left:992px;top:430px" width="18" height="16"><rect x="0.5" y="1.5" width="5" height="5" fill="#fff" stroke="#334"/><rect x="0.5" y="8.5" width="5" height="5" fill="#fff" stroke="#334"/><path d="M1.5,4 H4.5 M3,2.5 V5.5 M1.5,11 H4.5 M3,9.5 V12.5" stroke="#223"/><path d="M8,2 H17 M8,4.5 H17 M8,7 H17 M8,9.5 H17 M8,12 H17" stroke="#8a90a0" stroke-dasharray="2,1"/></svg>
<div class="a" style="left:1013px;top:428px;width:23px;height:23px;border:1px solid #3d8ec4;background:linear-gradient(#e4f3fc,#bfe1f5)"></div>
<div class="a" style="left:1017px;top:428px;font-family:Liberation Serif;font-size:10px;line-height:10px;color:#2a4aa0;font-weight:bold">A</div><div class="a" style="left:1017px;top:438px;font-family:Liberation Serif;font-size:10px;line-height:10px;color:#b02020;font-weight:bold">Z</div>
<svg class="a" style="left:1025px;top:430px" width="8" height="18"><path d="M4,1 V15 M1.5,12 L4,16 L6.5,12" stroke="#111" stroke-width="1.3" fill="none"/></svg>
<div class="a" style="left:1039px;top:430px;width:1px;height:18px;background:#b4b8c4"></div>
<div class="a" style="left:1045px;top:431px;width:16px;height:14px;border:1px solid #b4b8c0;background:linear-gradient(#f4f4f4,#dcdcdc)"></div>
<div class="a" style="left:988px;top:453px;width:142px;height:19px;background:#e8eaf4"></div>
<div class="a" style="left:988px;top:472px;width:291px;height:1px;background:#ececf0"></div>
<div class="a" style="left:1006px;top:455px;font-size:12px;line-height:16px;color:#111;letter-spacing:-0.1px">NativeElement</div>
<div class="a" style="left:988px;top:634px;width:291px;height:63px;background:#ebebeb;border-top:1px solid #a0a0a0;box-shadow:inset 0 3px 0 #f5f5f5, inset 0 4px 0 #a0a0a0"></div>
<div class="a" style="left:993px;top:641px;font-size:12px;line-height:16px;color:#111;font-weight:bold;letter-spacing:0px">NativeElement</div>

<!-- ===== ERROR LIST ===== -->
<div class="a" style="left:0;top:509px;width:983px;height:189px;background:#fff;border:1px solid #9aa3b5;border-bottom-color:#8a8f9a"></div>
<div class="a" style="left:0;top:509px;width:983px;height:45px;background:linear-gradient(#c9d3e7,#e4e9f4 40%,#f7f8fc 55%,#e9ecf4 80%,#d3d8e4);border-top:1px solid #a4abbb;border-bottom:1px solid #a4a9b4"></div>
<div class="a" style="left:5px;top:510px;font-size:12px;line-height:17px;letter-spacing:-0.3px;color:#3d4757">Error List</div>
<div class="arr2" style="left:936px;top:519px"></div>
<svg class="a" style="left:949px;top:512px" width="12" height="13"><path d="M3.5,1.5 H8.5 M4.5,1.5 V7.5 M7.5,1.5 V7.5 M2,7.5 H10 M6,7.5 V12" stroke="#2e3a4c" stroke-width="1.2" fill="none"/></svg>
<svg class="a" style="left:965px;top:513px" width="11" height="10"><path d="M1.5,1 L9.5,9 M9.5,1 L1.5,9" stroke="#2e3a4c" stroke-width="2"/></svg>
<div class="ebtn" style="left:5px;width:66px"></div>
<div class="a" style="left:9px;top:533px;width:14px;height:14px;border-radius:50%;background:radial-gradient(circle at 40% 35%,#f08a6a,#c8321a 60%,#a02010)"></div>
<svg class="a" style="left:12px;top:536px" width="8" height="8"><path d="M1.5,1.5 L6.5,6.5 M6.5,1.5 L1.5,6.5" stroke="#fff" stroke-width="1.8"/></svg>
<div class="etx" style="left:26px;letter-spacing:-0.3px">0 Errors</div>
<div class="a" style="left:73px;top:531px;width:1px;height:19px;background:#b0b6c4"></div>
<div class="ebtn" style="left:76px;width:85px"></div>
<svg class="a" style="left:79px;top:532px" width="17" height="16"><path d="M8.5,1 L16,15 H1 Z" fill="#f6d624" stroke="#8a7000" stroke-width="1" stroke-linejoin="round"/><path d="M8.5,5 V10.5" stroke="#111" stroke-width="2"/><circle cx="8.5" cy="13" r="1.1" fill="#111"/></svg>
<div class="etx" style="left:97px">0 Warnings</div>
<div class="a" style="left:163px;top:531px;width:1px;height:19px;background:#b0b6c4"></div>
<div class="ebtn" style="left:167px;width:86px"></div>
<div class="a" style="left:170px;top:533px;width:15px;height:15px;border-radius:50%;border:1px solid #7a8aa8;background:radial-gradient(circle at 40% 35%,#fff,#e2e8f2)"></div>
<div class="a" style="left:175px;top:533px;font-family:Liberation Serif;font-weight:bold;font-size:13px;line-height:15px;color:#2a3f8a">i</div>
<div class="etx" style="left:187px;letter-spacing:-0.2px">0 Messages</div>
<div class="a" style="left:1px;top:554px;width:981px;height:23px;background:linear-gradient(#fff,#f6f7f9 50%,#eceef2);border-bottom:1px solid #d5d7dc"></div>
<div class="a" style="left:792px;top:554px;width:70px;height:23px;background:linear-gradient(#e6f3fb,#d4eaf7);border-left:1px solid #c4dcea;border-right:1px solid #c4dcea;border-bottom:1px solid #b4d2e4"></div>
<div class="a" style="left:823px;top:555px;border-left:3.5px solid transparent;border-right:3.5px solid transparent;border-bottom:3.5px solid #6a7a8a"></div>
<div class="a" style="left:17px;top:554px;width:1px;height:143px;background:#e9e9ec"></div>
<div class="a" style="left:36px;top:554px;width:1px;height:143px;background:#e9e9ec"></div>
<div class="a" style="left:601px;top:554px;width:1px;height:143px;background:#e9e9ec"></div>
<div class="a" style="left:721px;top:554px;width:1px;height:143px;background:#e9e9ec"></div>
<div class="a" style="left:792px;top:554px;width:1px;height:143px;background:#e9e9ec"></div>
<div class="a" style="left:861px;top:554px;width:1px;height:143px;background:#e9e9ec"></div>
<div class="a" style="left:42px;top:558px;font-size:12px;line-height:16px;color:#111;letter-spacing:-0.1px">Description</div>
<div class="a" style="left:607px;top:558px;font-size:12px;line-height:16px;color:#111;letter-spacing:0px">File</div>
<div class="a" style="left:727px;top:558px;font-size:12px;line-height:16px;color:#111;letter-spacing:0px">Line</div>
<div class="a" style="left:797px;top:558px;font-size:12px;line-height:16px;color:#111;letter-spacing:-0.1px">Column</div>
<div class="a" style="left:867px;top:558px;font-size:12px;line-height:16px;color:#111;letter-spacing:-0.1px">Project</div>
<div class="a" style="left:1px;top:597px;width:981px;height:1px;background:#ececef"></div>
<div class="a" style="left:1px;top:617px;width:981px;height:1px;background:#ececef"></div>
<div class="a" style="left:1px;top:637px;width:981px;height:1px;background:#ececef"></div>
<div class="a" style="left:1px;top:657px;width:981px;height:1px;background:#ececef"></div>
<div class="a" style="left:1px;top:677px;width:981px;height:1px;background:#ececef"></div>
<div class="a" style="left:1px;top:697px;width:981px;height:1px;background:#ececef"></div>

<!-- ===== STATUS BAR ===== -->
<div class="a" style="left:0;top:696px;width:1280px;height:24px;background:#efebeb;border-top:2px solid #8a8a8a"></div>
<div class="st" style="left:10px;letter-spacing:-0.6px">Ready</div>
<div class="st" style="left:945px;letter-spacing:-0.2px">Ln 22</div>
<div class="st" style="left:1027px;letter-spacing:-0.2px">Col 25</div>
<div class="st" style="left:1117px;letter-spacing:-0.2px">Ch 25</div>
<div class="st" style="left:1248px;letter-spacing:-0.2px">INS</div>
</body></html>
